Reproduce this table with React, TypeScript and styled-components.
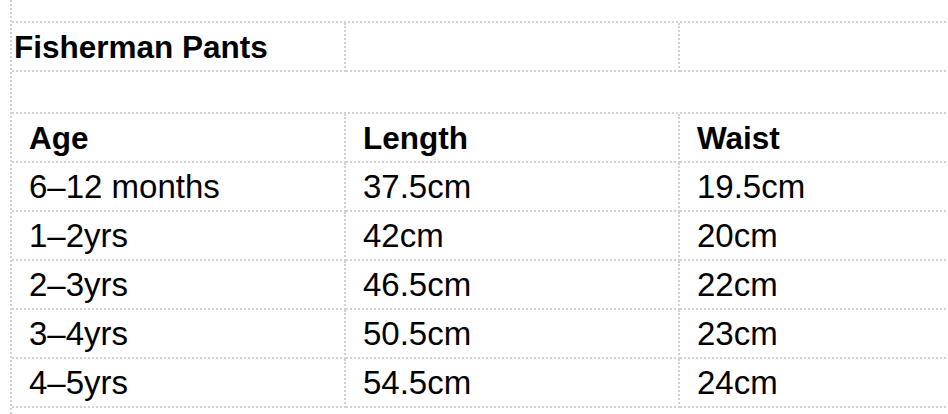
import React from "react";
import styled, { createGlobalStyle } from "styled-components";

const GlobalStyle = createGlobalStyle`
    html, body {
        margin: 0;
        padding: 0;
        background: #ffffff;
        overflow: hidden;
    }
    body {
        font-family: "Liberation Sans", Arial, sans-serif;
        color: #000000;
    }
`;

const dotted = "2px dotted #d2d2d2";

const Sheet = styled.div`
    margin-left: 10px;
    padding-top: 21px;
    width: 938px;
    height: 414px;
    box-sizing: border-box;
    border-left: ${dotted};
    overflow: hidden;
`;

const Grid = styled.div`
    display: grid;
    grid-template-columns: 334px 334px 334px;
    grid-auto-rows: 49px;
    width: 1002px;
    border-top: ${dotted};
`;

const Cell = styled.div<{ head?: boolean; tight?: boolean }>`
    box-sizing: border-box;
    border-bottom: ${dotted};
    border-right: ${dotted};
    padding: 1px 0 0 ${p => (p.tight ? "2px" : "17px")};
    font-size: ${p => (p.head ? "31.5px" : "33px")};
    font-weight: ${p => (p.head ? 700 : 400)};
    line-height: 46px;
    white-space: nowrap;
    overflow: hidden;
`;

const Spacer = styled.div`
    height: 40px;
`;

const rows = [
    ["6–12 months", "37.5cm", "19.5cm"],
    ["1–2yrs", "42cm", "20cm"],
    ["2–3yrs", "46.5cm", "22cm"],
    ["3–4yrs", "50.5cm", "23cm"],
    ["4–5yrs", "54.5cm", "24cm"],
];

export default function App() {
    return (
        <>
            <GlobalStyle />
            <Sheet>
                <Grid>
                    <Cell head tight>Fisherman Pants</Cell>
                    <Cell />
                    <Cell />
                </Grid>
                <Spacer />
                <Grid>
                    <Cell head>Age</Cell>
                    <Cell head>Length</Cell>
                    <Cell head>Waist</Cell>
                    {rows.map(r =>
                        r.map((v, i) => <Cell key={r[0] + i}>{v}</Cell>)
                    )}
                </Grid>
            </Sheet>
        </>
    );
}
